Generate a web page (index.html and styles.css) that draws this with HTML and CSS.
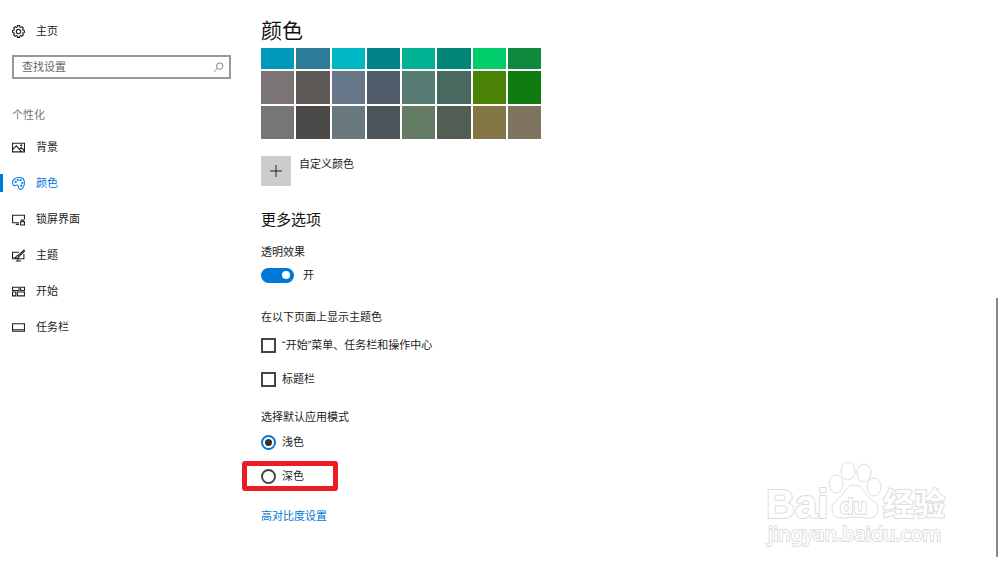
FILE: index.html
```html
<!DOCTYPE html>
<html lang="zh-CN">
<head>
<meta charset="utf-8">
<meta name="viewport" content="width=device-width, initial-scale=1">
<title>颜色</title>
<link rel="stylesheet" href="styles.css">
</head>
<body>
<div class="app">
  <aside class="sidebar">
    <a class="item home" href="#home">
      <svg class="icon" viewBox="-12 -12 24 24"><path d="M-2.500-8.100-1.900-10.800H1.900L2.500-8.100 4-7.500 6.300-9 9-6.300 7.500-4 8.100-2.500 10.800-1.900V1.900L8.100 2.500 7.500 4 9 6.300 6.300 9 4 7.500 2.500 8.100 1.900 10.800H-1.900L-2.500 8.100-4 7.500-6.300 9-9 6.300-7.500 4-8.100 2.500-10.800 1.900V-1.900L-8.100-2.500-7.500-4-9-6.300-6.300-9-4-7.500z"/><circle r="4"/></svg>
      <span>主页</span>
    </a>
    <label class="search">
      <input class="search-input" type="text" placeholder="查找设置" aria-label="查找设置">
      <svg class="search-icon" viewBox="0 0 12 12"><circle cx="7.300" cy="4.500" r="3.500"/><path d="M4.800 7 1 10.800"/></svg>
    </label>
    <h2 class="group">个性化</h2>
    <nav class="nav">
      <a class="item" href="#background">
        <svg class="icon" viewBox="0 0 24 24"><path d="M1 4h22v16H1zM1 16l7-7 10 11M14 15l3-3 6 6"/><circle cx="17" cy="8" r="1"/></svg>
        <span>背景</span>
      </a>
      <a class="item active" href="#colors" aria-current="page">
        <svg class="icon" viewBox="0 0 24 24"><path d="M1 10C1 5 7 1 13 1s10 4 10 10-4 12-8 12c-5 0-1-6-5-8-3-1-3 2-6 1-2-1-3-3-3-6z"/><circle cx="7" cy="9" r="1"/><circle cx="11" cy="5.500" r="1"/><circle cx="16" cy="6" r="1"/><circle cx="19" cy="11" r="1"/><circle cx="17" cy="16" r="1"/></svg>
        <span>颜色</span>
      </a>
      <a class="item" href="#lock">
        <svg class="icon" viewBox="0 0 24 24"><path d="M13 18H1V4h22v8M7 21h6M16 16h7v6h-7zM17 16v-3h4v3"/></svg>
        <span>锁屏界面</span>
      </a>
      <a class="item" href="#themes">
        <svg class="icon" viewBox="0 0 24 24"><path d="M13 6H1v12h21V9M7 22h10M11 18v4M22 2 11 12l2 2L23 4zM11 12c-4 0-2 4-6 4 3 2 8 1 8-2"/></svg>
        <span>主题</span>
      </a>
      <a class="item" href="#start">
        <svg class="icon" viewBox="0 0 24 24"><path d="M1 4h12v6H1zM16 4h7v6h-7zM1 13h6v7H1zM10 13h13v7H10z"/></svg>
        <span>开始</span>
      </a>
      <a class="item" href="#taskbar">
        <svg class="icon" viewBox="0 0 24 24"><path d="M1 5h22v14H1zM1 16h22"/></svg>
        <span>任务栏</span>
      </a>
    </nav>
  </aside>

  <main class="content">
    <h1 class="title">颜色</h1>
    <div class="swatches">
      <button class="swatch c1" aria-label="颜色 1"></button>
      <button class="swatch c2" aria-label="颜色 2"></button>
      <button class="swatch c3" aria-label="颜色 3"></button>
      <button class="swatch c4" aria-label="颜色 4"></button>
      <button class="swatch c5" aria-label="颜色 5"></button>
      <button class="swatch c6" aria-label="颜色 6"></button>
      <button class="swatch c7" aria-label="颜色 7"></button>
      <button class="swatch c8" aria-label="颜色 8"></button>
      <button class="swatch c9" aria-label="颜色 9"></button>
      <button class="swatch c10" aria-label="颜色 10"></button>
      <button class="swatch c11" aria-label="颜色 11"></button>
      <button class="swatch c12" aria-label="颜色 12"></button>
      <button class="swatch c13" aria-label="颜色 13"></button>
      <button class="swatch c14" aria-label="颜色 14"></button>
      <button class="swatch c15" aria-label="颜色 15"></button>
      <button class="swatch c16" aria-label="颜色 16"></button>
      <button class="swatch c17" aria-label="颜色 17"></button>
      <button class="swatch c18" aria-label="颜色 18"></button>
      <button class="swatch c19" aria-label="颜色 19"></button>
      <button class="swatch c20" aria-label="颜色 20"></button>
      <button class="swatch c21" aria-label="颜色 21"></button>
      <button class="swatch c22" aria-label="颜色 22"></button>
      <button class="swatch c23" aria-label="颜色 23"></button>
      <button class="swatch c24" aria-label="颜色 24"></button>
    </div>
    <div class="custom">
      <button class="add" id="add" aria-labelledby="add-label"><svg class="plus" viewBox="0 0 12 12"><path d="M6 0v12M0 6h12"/></svg></button>
      <label id="add-label" for="add">自定义颜色</label>
    </div>

    <h2 class="section">更多选项</h2>
    <label class="line" for="transparency">透明效果</label>
    <div class="option toggle-row">
      <input class="toggle" type="checkbox" role="switch" id="transparency" checked>
      <span>开</span>
    </div>

    <fieldset class="set accents">
      <legend class="line">在以下页面上显示主题色</legend>
      <label class="option"><input class="check" type="checkbox"><span>“开始”菜单、任务栏和操作中心</span></label>
      <label class="option"><input class="check" type="checkbox"><span>标题栏</span></label>
    </fieldset>

    <fieldset class="set modes">
      <legend class="line">选择默认应用模式</legend>
      <label class="option"><input class="radio" type="radio" name="mode" checked><span>浅色</span></label>
      <label class="option marked"><input class="radio" type="radio" name="mode"><span>深色</span></label>
    </fieldset>
    <a class="link" href="#contrast">高对比度设置</a>
  </main>
  <div class="scrollbar"></div>
  <svg class="watermark" viewBox="0 0 190 94" role="img" aria-label="Baidu 经验">
    <g class="mark">
      <text class="brand" x="3" y="65">Bai</text>
      <ellipse cx="73" cy="31" rx="7" ry="9"/>
      <ellipse cx="85" cy="18" rx="7" ry="9"/>
      <ellipse cx="101" cy="20" rx="7" ry="9"/>
      <ellipse cx="111" cy="34" rx="7" ry="9"/>
      <path d="M91 32c7 0 9 5 13 10 5 6 11 8 11 14 0 7-5 10-11 9-9-1-17-1-24 0-7 1-11-3-11-9s5-9 10-14c4-5 6-10 12-10z"/>
      <text class="du" x="77" y="61">du</text>
      <text class="cjk" x="120" y="62">经验</text>
      <text class="site" x="5" y="88">jingyan.baidu.com</text>
    </g>
  </svg>
</div>
</body>
</html>
```
FILE: styles.css
```css
*, *::before, *::after { box-sizing: border-box; }
body {
  margin: 0;
  background: #fff;
  color: #222;
  font: 11px/16px "Liberation Sans", "Noto Sans CJK SC", sans-serif;
}
h1, h2 { margin: 0; font-weight: 400; }
button { border: 0; padding: 0; }
input { margin: 0; }

.app { display: flex; position: relative; min-height: 100vh; }

.sidebar { width: 231px; flex: none; padding-top: 13px; }
.item {
  display: flex;
  align-items: center;
  gap: 11px;
  height: 36px;
  padding-left: 12px;
  color: inherit;
  text-decoration: none;
}
.icon {
  width: 13px;
  height: 13px;
  fill: none;
  stroke: currentColor;
  stroke-width: 2;
}
.active { color: #0078d7; position: relative; }
.active::before {
  content: "";
  position: absolute;
  left: 0;
  width: 3px;
  height: 18px;
  background: #0078d7;
}
.search {
  display: flex;
  align-items: center;
  height: 24px;
  margin: 6px 0 0 12px;
  padding: 0 5px 0 8px;
  border: 2px solid #999;
}
.search-input {
  flex: 1;
  min-width: 0;
  padding: 0;
  border: 0;
  outline: 0;
  background: none;
  font: inherit;
}
.search-input::placeholder { color: #666; opacity: 1; }
.search-icon { width: 11px; height: 11px; fill: none; stroke: #777; }
.group { padding: 28px 0 6px 12px; font-size: 11px; line-height: 16px; color: #767676; }

.content { flex: 1; padding: 14px 30px 30px; display: flex; flex-direction: column; align-items: flex-start; }
.title { font-size: 21px; line-height: 34px; color: #111; }
.swatches {
  display: grid;
  grid-template-columns: repeat(8, 1fr);
  grid-template-rows: 21px 33px 33px;
  gap: 2px;
  width: 280px;
}
.c1 { background: #0099bc; } .c2 { background: #2d7d9a; }
.c3 { background: #00b7c3; } .c4 { background: #038387; }
.c5 { background: #00b294; } .c6 { background: #018574; }
.c7 { background: #00cc6a; } .c8 { background: #10893e; }
.c9 { background: #7a7574; } .c10 { background: #5d5a58; }
.c11 { background: #68768a; } .c12 { background: #515c6b; }
.c13 { background: #567c73; } .c14 { background: #486860; }
.c15 { background: #498205; } .c16 { background: #107c10; }
.c17 { background: #767676; } .c18 { background: #4c4a48; }
.c19 { background: #69797e; } .c20 { background: #4a5459; }
.c21 { background: #647c64; } .c22 { background: #525e54; }
.c23 { background: #847545; } .c24 { background: #7e735f; }

.custom { display: flex; gap: 8px; margin-top: 17px; }
.add { display: grid; place-items: center; width: 30px; height: 30px; background: #ccc; }
.plus { width: 12px; height: 12px; stroke: #222; fill: none; }

.section { margin-top: 22px; font-size: 15px; line-height: 24px; color: #111; }
.line { display: block; padding: 0; }
.section + .line { margin-top: 12px; }
.option { display: flex; align-items: center; gap: 6px; height: 18px; }
.toggle-row { gap: 9px; margin-top: 6px; }
.toggle, .check, .radio { appearance: none; flex: none; }
.toggle {
  display: flex;
  align-items: center;
  justify-content: flex-end;
  width: 33px;
  height: 15px;
  padding-right: 4px;
  border-radius: 8px;
  background: #0078d7;
}
.toggle::before { content: ""; width: 8px; height: 8px; border-radius: 50%; background: #fff; }
.toggle:not(:checked) { justify-content: flex-start; padding: 0 0 0 4px; background: #777; }

.set { border: 0; margin: 0; padding: 0; min-width: 0; }
.accents { margin-top: 25px; }
.accents .option { margin-top: 11px; }
.accents .option + .option { margin-top: 16px; }
.check { width: 15px; height: 15px; border: 2px solid #444; }
.check:checked { background: #0078d7; }
.modes { margin-top: 21px; }
.modes .option { margin-top: 8px; }
.modes .option + .option { margin-top: 16px; }
.radio {
  display: grid;
  place-items: center;
  width: 15px;
  height: 15px;
  border: 2px solid #444;
  border-radius: 50%;
}
.radio:checked { border-color: #0078d7; }
.radio:checked::before { content: ""; width: 7px; height: 7px; border-radius: 50%; background: #333; }
.marked { position: relative; }
.marked::after {
  content: "";
  position: absolute;
  top: -6px;
  left: -19px;
  width: 96px;
  height: 30px;
  border: 5px solid #ed1c24;
  border-radius: 3px;
}
.link { margin-top: 23px; color: #0078d7; text-decoration: none; }

.scrollbar {
  position: absolute;
  right: 2px;
  top: 298px;
  bottom: 12px;
  width: 2px;
  background: #888;
}
.watermark { position: absolute; right: 47px; bottom: 22px; width: 190px; height: 94px; overflow: visible; }
.mark { fill: #fff; stroke: #ddd; stroke-width: 1; }
.brand, .cjk, .du, .site { paint-order: stroke; stroke-width: 2; }
.brand { font: 700 40px "Liberation Sans", sans-serif; }
.du { font: 700 22px "Liberation Sans", sans-serif; }
.cjk { font: 700 31px "Noto Sans CJK SC", sans-serif; }
.site { font: 20px "Noto Sans", sans-serif; }
```
